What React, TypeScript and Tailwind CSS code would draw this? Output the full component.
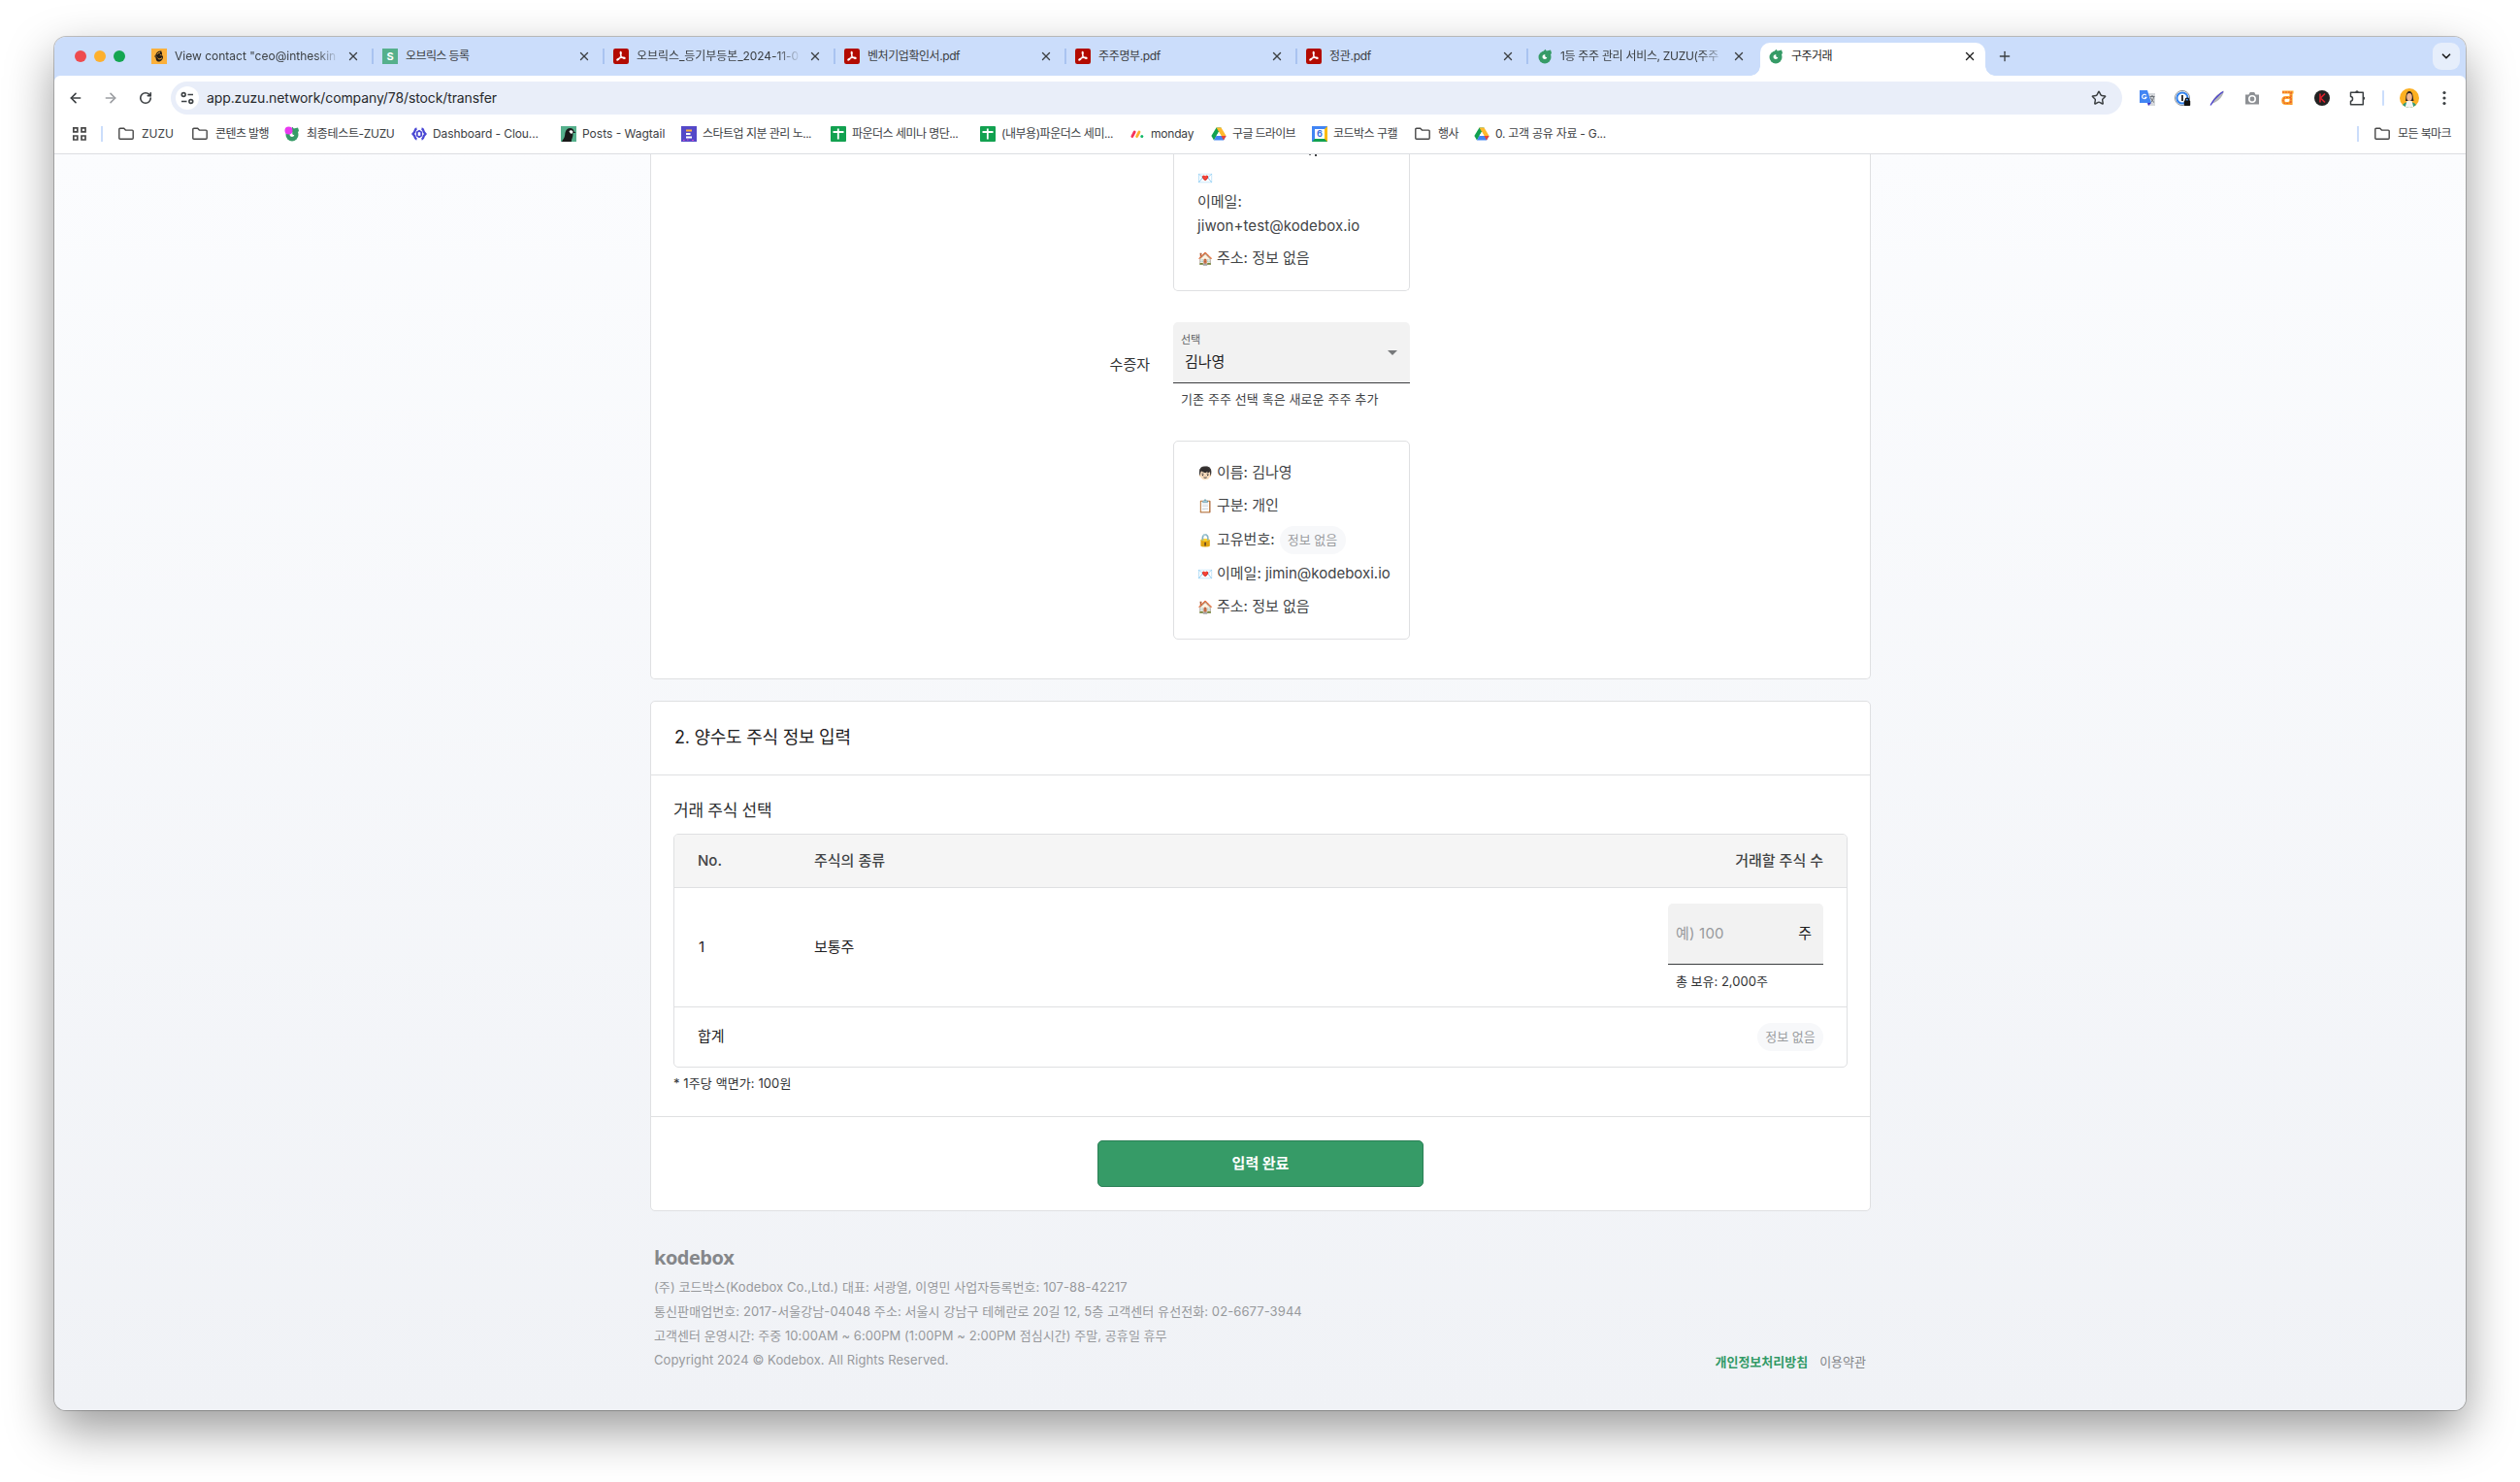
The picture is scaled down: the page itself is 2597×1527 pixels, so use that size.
import type { ReactNode } from "react";
import clsx from "clsx";
import { ArrowLeft, ArrowRight, ChevronDown, Plus, RotateCw, Star, X } from "lucide-react";

const TABS: { icon: ReactNode; title: string; fade?: boolean; tracking: string }[] = [
  { icon: <MailIcon />, title: 'View contact "ceo@intheskin', fade: true, tracking: "tracking-normal" },
  { icon: <SquareS />, title: "오브릭스 등록", tracking: "tracking-[-0.6px]" },
  { icon: <PdfIcon />, title: "오브릭스_등기부등본_2024-11-0", fade: true, tracking: "tracking-[-0.07px]" },
  { icon: <PdfIcon />, title: "벤처기업확인서.pdf", tracking: "tracking-[-0.44px]" },
  { icon: <PdfIcon />, title: "주주명부.pdf", tracking: "tracking-[-0.35px]" },
  { icon: <PdfIcon />, title: "정관.pdf", tracking: "tracking-[-0.28px]" },
  { icon: <ZuzuIcon />, title: "1등 주주 관리 서비스, ZUZU(주주", fade: true, tracking: "tracking-[-0.31px]" },
];

const BOOKMARKS: { icon: ReactNode; title: string; className: string }[] = [
  { icon: <FolderIcon />, title: "ZUZU", className: "w-[76px] gap-2" },
  { icon: <FolderIcon />, title: "콘텐츠 발행", className: "w-[95px] gap-2 tracking-[-0.6px]" },
  { icon: <ZuzuIcon dot />, title: "최종테스트-ZUZU", className: "w-[131px] gap-[7px] tracking-[-0.32px]" },
  { icon: <CloudIcon />, title: "Dashboard - Clou...", className: "w-[154px] gap-1.5 tracking-[-0.08px]" },
  { icon: <WagtailIcon />, title: "Posts - Wagtail", className: "w-[124px] gap-1.5" },
  { icon: <NoteIcon />, title: "스타트업 지분 관리 노...", className: "w-[154px] gap-1.5 tracking-[-0.52px]" },
  { icon: <SheetIcon />, title: "파운더스 세미나 명단...", className: "w-[154px] gap-1.5 tracking-[-0.53px]" },
  { icon: <SheetIcon />, title: "(내부용)파운더스 세미...", className: "w-[154px] gap-1.5 tracking-[-0.46px]" },
  { icon: <MondayIcon />, title: "monday", className: "w-[84px] gap-1.5 tracking-[-0.2px]" },
  { icon: <DriveIcon />, title: "구글 드라이브", className: "w-[104px] gap-1.5 tracking-[-0.66px]" },
  { icon: <CalendarIcon />, title: "코드박스 구캘", className: "w-[106px] gap-1.5 tracking-[-0.52px]" },
  { icon: <FolderIcon />, title: "행사", className: "w-[61px] gap-2 tracking-[-0.55px]" },
  { icon: <DriveIcon />, title: "0. 고객 공유 자료 - G...", className: "gap-1.5 tracking-[-0.26px]" },
];

function MailIcon() {
  return (
    <svg viewBox="0 0 16 16" className="size-4">
      <rect width="16" height="16" fill="#fbb03b" />
      <path d="M4.5 9.5c-1.6-.6-1.4-2.6 0-2.9.2-2.6 3-4.4 5.600-4.100.9.2.6.9.1 1.200.8.2 1.100 1 .7 1.900.2 1.500.5 2 1.100 3-.1 3.400-2.600 5.100-4.700 5-1.700 0-2.500-1.500-2.800-4.100z" fill="#241c15" />
      <path d="M5.800 6.200c.8-1.300 1.900-2 3.200-2M8.800 6.800c.7-.4 1.200-.3 1.700.1M6.500 9.800c1 1.500 3 1.300 4.500-.2M4 7.500l1 1" fill="none" stroke="#fbb03b" strokeWidth="1" />
    </svg>
  );
}

function SquareS() {
  return (
    <span className="flex size-4 items-center justify-center bg-[#55b08c] text-[11px] font-bold tracking-normal text-white">
      S
    </span>
  );
}

function PdfIcon() {
  return (
    <svg viewBox="0 0 16 16" className="size-4">
      <rect width="16" height="16" rx="2.200" fill="#b30b00" />
      <path
        d="M7.600 3.400c1 0 .8 2.200 0 4.200-.8 2.100-2.500 4.600-3.500 4.500-1-.3.300-1.800 3-2.500 2.400-.6 4.900-.7 5.100.2.200 1-1.800.7-3.200-.8C7.600 7.700 6.600 3.500 7.600 3.400z"
        fill="none"
        stroke="#fff"
        strokeWidth="1.100"
      />
    </svg>
  );
}

function ZuzuIcon({ dot }: { dot?: boolean }) {
  return (
    <svg viewBox="0 0 16 16" className="size-4">
      <circle cx="8" cy="9" r="6.500" fill="#369b67" />
      <path d="M6.500 3 8.500.8l1.200 1.700L14 1.500l1 3-1.500 3z" fill="#369b67" />
      <path d="M8.300 6C5.800 6.200 5.200 8 5.700 9.500c.9 2.200 4.400 1.900 4.600-.8-1.200.7-2.400 0-2-2.700z" fill="#fff" />
      {dot && <circle cx="4.500" cy="4.500" r="4" fill="#e83af0" />}
    </svg>
  );
}

function FolderIcon() {
  return (
    <svg viewBox="0 0 16 16" className="size-4" fill="none" stroke="#474747" strokeWidth="1.400">
      <path d="M.8 3.300c0-.6.400-1 1-1h3.900l1.700 1.800h6.800c.6 0 1 .4 1 1v7.100c0 .6-.4 1-1 1H1.800c-.6 0-1-.4-1-1z" />
    </svg>
  );
}

function CloudIcon() {
  return (
    <svg viewBox="0 0 16 16" className="size-4" fill="none" stroke="#4a48d4" strokeWidth="2.400">
      <path d="M5.500 2.500C3.500 3 3.500 5 3.200 6L1.500 8l1.700 2c.3 1 .3 3 2.300 3.500M10.500 2.500c2 .5 2 2.500 2.300 3.500l1.700 2-1.700 2c-.3 1-.3 3-2.300 3.500" />
      <path d="M8 4.800 10.200 6.200v3.600L8 11.200 5.800 9.800V6.200z" strokeWidth="1.800" />
    </svg>
  );
}

function WagtailIcon() {
  return (
    <svg viewBox="0 0 16 16" className="size-4">
      <rect width="16" height="16" fill="#55b08c" />
      <path d="M1 16c1-2.500 2.800-3.500 3.200-7C4.500 5 6 2 9.500 2c2.500 0 3.800 1.500 4 3.500L15.500 7h-3.200c.8 4-1.800 7-1.300 9z" fill="#191919" />
      <path d="M8.500 5.500c1-2 3.500-1.500 4 .3-.2 1.500-1.500 2.500-2.500 1.700z" fill="#fff" />
    </svg>
  );
}

function NoteIcon() {
  return (
    <svg viewBox="0 0 16 16" className="size-4">
      <rect width="16" height="16" fill="#5448c8" />
      <path d="M5 4.500h6" stroke="#ffb23e" strokeWidth="1.800" />
      <path d="M5 8h4.500M5 11.500h6" stroke="#fff" strokeWidth="1.800" />
      <path d="M2 14.500h1.500M6 14h1.500M11 14.500h2" stroke="#d84bd0" strokeWidth="1" />
    </svg>
  );
}

function SheetIcon() {
  return (
    <svg viewBox="0 0 16 16" className="size-4">
      <rect width="16" height="16" rx="1" fill="#12a150" />
      <path d="M2.500 6h11M7.800 2.500v11" stroke="#fff" strokeWidth="1.800" />
    </svg>
  );
}

function MondayIcon() {
  return (
    <svg viewBox="0 0 16 16" className="size-4" strokeLinecap="round" strokeWidth="2.800">
      <path d="M2.800 10.600 5.200 6" stroke="#f6325a" />
      <path d="M7.600 10.600 10 6" stroke="#ffb02e" />
      <circle cx="12.800" cy="10.400" r="1.500" fill="#12b866" />
    </svg>
  );
}

function DriveIcon() {
  return (
    <svg viewBox="0 0 16 16" className="size-4">
      <path d="M5.500 1.500h5L8 6 3 14.500.4 10z" fill="#12a150" />
      <path d="M5.500 1.500h5L15.600 10h-5.100z" fill="#ffba2c" />
      <path d="M3 14.500 5.500 10h10.100L13 14.500z" fill="#4285f4" />
      <path d="m13 14.500-2.500-4.500h5.100z" fill="#ea4335" />
      <path d="M8 5.700 5.500 10h5z" fill="#fff" />
    </svg>
  );
}

function CalendarIcon() {
  return (
    <span className="flex size-4 items-center justify-center border-[3px] border-t-[#4285f4] border-r-[#fbbc04] border-b-[#12a150] border-l-[#4285f4] bg-white text-[9px] font-bold tracking-normal text-[#3c6fe0]">
      6
    </span>
  );
}

function SiteInfoIcon() {
  return (
    <svg viewBox="0 0 16 16" className="size-4" fill="none" stroke="#3c4043" strokeWidth="1.600">
      <circle cx="4.200" cy="4.500" r="1.900" />
      <path d="M8.500 4.500H14M2 11.500h5.500" />
      <circle cx="11.800" cy="11.500" r="1.900" />
    </svg>
  );
}

function Extensions() {
  return (
    <>
      <svg viewBox="0 0 20 20" className="size-5">
        <path d="M8 5h10v13h-7z" fill="#d5d8dc" />
        <path d="M2 2h8l4 13H2z" fill="#4285f4" />
        <path d="m10 15 4 0-3 3z" fill="#3a30c8" />
        <path d="M8.700 7.200a2.200 2.200 0 1 0 .3 2H7" fill="none" stroke="#fff" strokeWidth="1.100" />
        <path d="M12.500 8.500h5M15 7v1.500M13.500 14.500c2-1.500 2.800-3.500 3-6M13.500 9.500c.5 2 2 4 3.500 5" fill="none" stroke="#6b7078" strokeWidth="1" />
      </svg>
      <svg viewBox="0 0 20 20" className="size-5">
        <circle cx="10" cy="10" r="7.600" fill="#fff" stroke="#8a8f96" strokeWidth="1" />
        <circle cx="10" cy="10" r="5.600" fill="#fff" stroke="#2f80ed" strokeWidth="2" />
        <path d="M10 7v6" stroke="#222" strokeWidth="1.800" />
        <rect x="11.800" y="12.600" width="6.400" height="5.400" rx=".8" fill="#111" />
        <path d="M13.300 13v-1.200a1.700 1.700 0 0 1 3.400 0V13" fill="none" stroke="#111" strokeWidth="1.200" />
      </svg>
      <svg viewBox="0 0 20 20" className="size-5">
        <path d="M3 17.500C5 11 10 5 17 2.500 16 8 12 13 5.500 15.500z" fill="#b4b6ba" />
        <path d="M3 17.500C6 12 11 7 16 3.500" fill="none" stroke="#4a3fd0" strokeWidth="1.200" />
      </svg>
      <svg viewBox="0 0 20 20" className="size-5">
        <path d="M3 6.500h3.500L7.800 4h4.400l1.300 2.500H17v10H3z" fill="#8d9094" />
        <circle cx="10" cy="11" r="3.200" fill="none" stroke="#fff" strokeWidth="1.600" />
      </svg>
      <svg viewBox="0 0 20 20" className="size-5" fill="none">
        <path d="M5 4h11.500M14 4v13M14 9.500H8.500C5 9.500 5 15.500 8.500 15.500h2.500c2 0 3-1.500 3-3" stroke="#fba62b" strokeWidth="3.200" />
        <path d="M5 4h10M14 4v12.500M14 9.500H8.500C5 9.500 5 15.500 8.500 15.500h2.500c2 0 3-1.500 3-3" stroke="#ea5a2c" strokeWidth="1.200" strokeDasharray="2 1" />
      </svg>
      <svg viewBox="0 0 20 20" className="size-5">
        <circle cx="10" cy="10" r="8" fill="#222" />
        <path d="M8 5.500v9M13 5.500 8.500 10l4.500 4.500" fill="none" stroke="#e0202c" strokeWidth="1.600" />
      </svg>
      <svg viewBox="0 0 20 20" className="size-5" fill="none" stroke="#3c4043" strokeWidth="1.500">
        <path d="M3.500 4.200h12.800v12.600H3.500v-3.600c2.700 0 2.700-4.800 0-4.800z" strokeLinejoin="round" />
        <path d="M8.300 4a1.700 1.700 0 0 1 3.400 0zM16.500 8.500a1.700 1.700 0 0 1 0 3.400z" fill="#3c4043" stroke="none" />
      </svg>
      <span className="h-4 w-0.5 rounded bg-[#cbddfb]" />
      <svg viewBox="0 0 20 20" className="size-5">
        <defs>
          <clipPath id="avatar">
            <circle cx="10" cy="10" r="10" />
          </clipPath>
        </defs>
        <g clipPath="url(#avatar)">
          <rect width="20" height="20" fill="#fdb022" />
          <path d="M6 13c.6-3 0-10 4-10s3.700 7 4.500 10z" fill="#2b2220" />
          <path d="M2 20c.5-4 3-5.500 8-6 5 .5 7.500 2 8 6z" fill="#2f9a78" />
          <path d="M5.500 20 7.500 13h5l2 7z" fill="#f4f4f4" />
          <ellipse cx="10" cy="9" rx="2.800" ry="4" fill="#f0b896" />
        </g>
      </svg>
      <svg viewBox="0 0 20 20" className="size-5" fill="#3c4043">
        <circle cx="10" cy="4.500" r="1.600" />
        <circle cx="10" cy="10" r="1.600" />
        <circle cx="10" cy="15.500" r="1.600" />
      </svg>
    </>
  );
}

function TabStrip() {
  return (
    <div className="flex h-10 items-center bg-[#cbddfb] pl-[21px] text-xs text-[#3c4043]">
      <div className="flex w-[79px] shrink-0 gap-2">
        <span className="size-3 rounded-full bg-[#ee4b4f]" />
        <span className="size-3 rounded-full bg-[#fdb02e]" />
        <span className="size-3 rounded-full bg-[#14a651]" />
      </div>
      {TABS.map((tab, i) => (
        <div key={tab.title} className="flex w-[238px] shrink-0 items-center">
          {tab.icon}
          <span
            className={clsx(
              "ml-2 w-[167px] overflow-hidden whitespace-nowrap",
              tab.tracking,
              tab.fade && "[mask-image:linear-gradient(to_right,black_145px,transparent_170px)]",
            )}
          >
            {tab.title}
          </span>
          <X className="ml-[10px] size-3.5" strokeWidth={2.4} />
          {i < TABS.length - 1 && <span className="ml-3 h-4 w-0.5 bg-[#a9c3f0]" />}
        </div>
      ))}
      <div className="relative -ml-2 flex h-[34px] w-[232px] shrink-0 items-center self-end rounded-t-[10px] bg-white pl-2 text-[#1f1f1f]">
        <span className="absolute bottom-0 -left-2.5 size-2.5 bg-[radial-gradient(circle_at_0_0,transparent_9.5px,white_10px)]" />
        <span className="absolute -right-2.5 bottom-0 size-2.5 bg-[radial-gradient(circle_at_100%_0,transparent_9.5px,white_10px)]" />
        <div className="flex flex-1 items-center pb-1.5">
          <ZuzuIcon />
          <span className="ml-2 flex-1 tracking-[-0.54px]">구주거래</span>
          <X className="mr-[9px] size-3.5" strokeWidth={2.4} />
        </div>
      </div>
      <Plus className="ml-3 size-4" strokeWidth={2} />
      <span className="mr-1.5 ml-auto flex size-7 items-center justify-center rounded-[9px] bg-[#e6eefb] text-[#1f1f1f]">
        <ChevronDown className="size-3.5" strokeWidth={3} />
      </span>
    </div>
  );
}

function Toolbar() {
  return (
    <div className="bg-[#cbddfb]">
      <div className="h-[81px] rounded-t-md border-b border-[#dcdee2] bg-white text-[#3c4043]">
        <div className="flex h-[46px] items-center gap-4 px-3">
          <ArrowLeft className="size-5 p-[2px]" strokeWidth={2.4} />
          <ArrowRight className="size-5 p-[2px] text-[#9b9da1]" strokeWidth={2.4} />
          <RotateCw className="size-5 p-[3px]" strokeWidth={2.8} />
          <div className="flex h-[34px] flex-1 items-center rounded-full bg-[#e9eef9] pr-4 pl-[5px]">
            <span className="flex size-6 items-center justify-center rounded-full bg-white">
              <SiteInfoIcon />
            </span>
            <span className="ml-2 flex-1 text-sm tracking-[-0.11px] text-[#27292c]">
              app.zuzu.network/company/78/stock/transfer
            </span>
            <Star className="size-4" strokeWidth={2.2} />
          </div>
          <Extensions />
        </div>
        <div className="flex h-7 items-center pr-[15px] pl-[18px] text-xs whitespace-nowrap">
          <svg viewBox="0 0 16 16" className="size-4" fill="none" stroke="#474747" strokeWidth="1.700">
            <path d="M1.800 1.800h4v4h-4zM10 1.800h4v4h-4zM1.800 10h4v4h-4zM10 10h4v4h-4z" />
          </svg>
          <span className="mr-4 ml-3.5 h-4 w-0.5 bg-[#cbddfb]" />
          {BOOKMARKS.map((b) => (
            <div key={b.title} className={clsx("flex shrink-0 items-center", b.className)}>
              {b.icon}
              <span>{b.title}</span>
            </div>
          ))}
          <span className="mr-4 ml-auto h-4 w-0.5 bg-[#cbddfb]" />
          <div className="flex items-center gap-2 tracking-[-0.6px]">
            <FolderIcon />
            <span>모든 북마크</span>
          </div>
        </div>
      </div>
    </div>
  );
}

function InfoRow({ emoji, className, children }: { emoji: string; className: string; children?: ReactNode }) {
  return (
    <div className={clsx("flex items-center whitespace-nowrap", className)}>
      <span className="mr-[5px] flex w-[15px] shrink-0 justify-center text-[13px]">{emoji}</span>
      {children}
    </div>
  );
}

function EmptyPill() {
  return (
    <span className="flex h-[29px] w-[68px] shrink-0 items-center justify-center rounded-full bg-[#f7f8fa] text-[13px] text-[#9a9c9f]">
      정보 없음
    </span>
  );
}

function PartySection() {
  return (
    <section className="h-[541px] rounded-b-[5px] border border-t-0 border-[#dfe0e2] bg-white text-[15px] text-[#424446]">
      <div className="ml-[538px] h-[141px] w-[244px] rounded-b-[5px] border border-t-0 border-[#dfe0e2] px-6">
        {/* tail of the row scrolled under the toolbar */}
        <div className="flex h-3 gap-1 pl-[115px]">
          <span className="h-px w-0.5 bg-[#6a6c6e]" />
          <span className="h-0.5 w-0.5 bg-[#424446]" />
        </div>
        <InfoRow emoji="💌" className="h-[25px]" />
        <div className="h-[24px] leading-[24px]">이메일:</div>
        <div className="h-[25px] leading-[25px] tracking-[0.08px]">jiwon+test@kodebox.io</div>
        <InfoRow emoji="🏠" className="mt-[9px] h-[25px]">
          주소: 정보 없음
        </InfoRow>
      </div>

      <div className="mt-8 flex">
        <div className="w-[538px] pt-[33px] pr-6 text-right text-[#303234]">수증자</div>
        <div className="w-[244px]">
          <div className="flex h-[63px] items-center justify-between rounded-t-[5px] border-b border-[#3b3d3f] bg-[#f2f2f2] pr-[13px] pl-2">
            <div className="pb-0.5">
              <div className="text-[11px] leading-[22px] text-[#606264]">선택</div>
              <div className="pl-1 leading-[24px] text-[#1f2123]">김나영</div>
            </div>
            <span className="mt-px border-x-[5px] border-t-[5px] border-x-transparent border-t-[#77797b]" />
          </div>
          <div className="pt-[5px] pl-2 text-[13px] leading-[22px] tracking-[0.1px]">기존 주주 선택 혹은 새로운 주주 추가</div>
        </div>
      </div>

      <div className="mt-8 ml-[538px] h-[205px] w-[244px] rounded-[5px] border border-[#dfe0e2] px-6 pt-5">
        <InfoRow emoji="👦🏻" className="h-[25px]">
          이름: 김나영
        </InfoRow>
        <InfoRow emoji="📋" className="mt-[9px] h-[25px]">
          구분: 개인
        </InfoRow>
        <InfoRow emoji="🔒" className="mt-2 h-[29px]">
          <span className="mr-[5px]">고유번호:</span>
          <EmptyPill />
        </InfoRow>
        <InfoRow emoji="💌" className="mt-2 h-[25px]">
          이메일: jimin@kodeboxi.io
        </InfoRow>
        <InfoRow emoji="🏠" className="mt-[9px] h-[25px]">
          주소: 정보 없음
        </InfoRow>
      </div>
    </section>
  );
}

function StockSection() {
  return (
    <section className="mt-[22px] rounded-[5px] border border-[#dfe0e2] bg-white text-[15px] text-[#1f2123]">
      <h2 className="flex h-[76px] items-center border-b border-[#dfe0e2] px-6 pb-0.5 text-lg tracking-[-0.25px]">
        2. 양수도 주식 정보 입력
      </h2>
      <div className="h-[352px] border-b border-[#dfe0e2] px-[23px] pt-6">
        <h3 className="mb-[11px] text-[17px] leading-[25px] tracking-[-0.25px] text-[#303234]">거래 주식 선택</h3>
        <div className="overflow-hidden rounded-[5px] border border-[#dfe0e2]">
          <div className="flex h-[55px] items-center border-b border-[#dfe0e2] bg-[#f5f5f5] px-6 font-medium text-[#424446]">
            <span className="w-[120px]">No.</span>
            <span className="flex-1">주식의 종류</span>
            <span>거래할 주식 수</span>
          </div>
          <div className="flex h-[123px] items-center border-b border-[#dfe0e2] px-6">
            <span className="w-[120px] pl-px">1</span>
            <span className="flex-1">보통주</span>
            <div className="w-40 self-start pt-4">
              <div className="flex h-[63px] items-center justify-between rounded-t-[5px] border-b border-[#3b3d3f] bg-[#f2f2f2] pr-3 pl-2">
                <span className="tracking-[0.2px] text-[#97999c]">예) 100</span>
                <span>주</span>
              </div>
              <div className="pt-1.5 pl-2 text-[13px] leading-[22px] text-[#303234]">총 보유: 2,000주</div>
            </div>
          </div>
          <div className="flex h-[61px] items-center justify-between px-6">
            <span>합계</span>
            <EmptyPill />
          </div>
        </div>
        <p className="mt-1.5 text-[13px] leading-5 tracking-[0.1px] text-[#303234]">* 1주당 액면가: 100원</p>
      </div>
      <div className="flex h-[96px] items-center justify-center">
        <button
          type="button"
          className="h-12 w-[336px] rounded-[5px] border border-[#2a7f55] bg-[#369b67] font-bold text-white"
        >
          입력 완료
        </button>
      </div>
    </section>
  );
}

function Footer() {
  return (
    <footer className="flex items-end justify-between pt-[34px] pr-[5px] pl-1 text-[13px] leading-[25px] text-[#97999c]">
      <div className="tracking-[0.09px]">
        <div className="mb-[5px] font-['Open_Sans'] text-[20px] leading-[27px] font-bold tracking-[-0.5px] text-[#85878a]">
          kodebox
        </div>
        <p>(주) 코드박스(Kodebox Co.,Ltd.) 대표: 서광열, 이영민 사업자등록번호: 107-88-42217</p>
        <p>통신판매업번호: 2017-서울강남-04048 주소: 서울시 강남구 테헤란로 20길 12, 5층 고객센터 유선전화: 02-6677-3944</p>
        <p className="tracking-[0.05px]">
          고객센터 운영시간: 주중 10:00AM ~ 6:00PM (1:00PM ~ 2:00PM 점심시간) 주말, 공휴일 휴무
        </p>
        <p>Copyright 2024 © Kodebox. All Rights Reserved.</p>
      </div>
      <div className="-mb-0.5 flex gap-3">
        <a className="font-bold text-[#329a66]">개인정보처리방침</a>
        <a className="text-[#85878a]">이용약관</a>
      </div>
    </footer>
  );
}

export default function App() {
  return (
    <div className="h-[1527px] w-[2597px] overflow-hidden bg-white px-14 pt-[38px] font-['Inter','Noto_Sans_CJK_KR',sans-serif]">
      <div className="h-[1415px] w-[2485px] overflow-hidden rounded-[12px] bg-[#f0f2f7] shadow-[0_0_0_1px_rgba(0,0,0,0.22),0_20px_50px_rgba(0,0,0,0.4)]">
        <TabStrip />
        <Toolbar />
        <main className="h-[1294px] bg-linear-to-b from-[#fbfcfe] to-[#f0f2f6]">
          <div className="ml-[614px] w-[1258px]">
            <PartySection />
            <StockSection />
            <Footer />
          </div>
        </main>
      </div>
    </div>
  );
}
